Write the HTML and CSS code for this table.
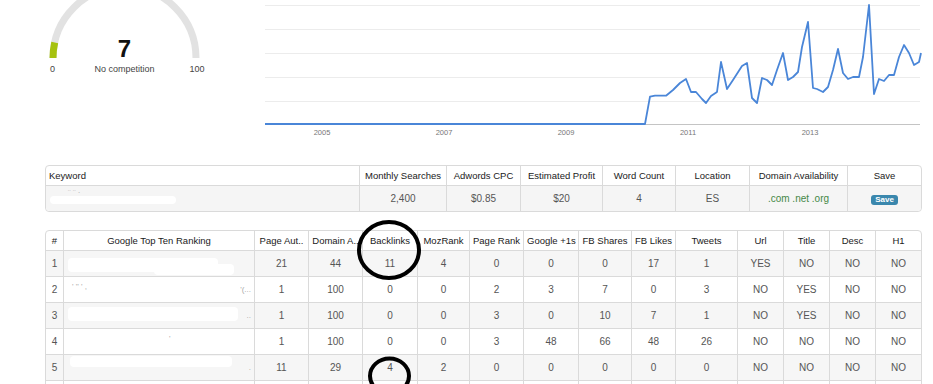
FILE: index.html
```html
<!DOCTYPE html>
<html lang="en">
<head>
<meta charset="utf-8">
<title>Keyword research</title>
<link rel="stylesheet" href="styles.css">
</head>
<body>
<div class="page">
  <section class="top">
    <svg class="gauge" width="265" height="165" viewBox="0 0 265 165">
      <path d="M 53 58 A 71.5 71.5 0 0 1 196 58" fill="none" stroke="#e2e2e2" stroke-width="7"/>
      <path d="M 53 58 A 71.5 71.5 0 0 1 54.72 42.4" fill="none" stroke="#a6c20f" stroke-width="7"/>
      <text class="g-value" x="124.5" y="57" text-anchor="middle">7</text>
      <text class="g-label" x="124.5" y="71.5" text-anchor="middle">No competition</text>
      <text class="g-label" x="52.5" y="71.5" text-anchor="middle">0</text>
      <text class="g-label" x="197" y="71.5" text-anchor="middle">100</text>
    </svg>
    <svg class="trend" width="668" height="165" viewBox="265 0 668 165">
      <g stroke="#ececec" stroke-width="1">
        <line x1="265" y1="5.5" x2="920" y2="5.5"/>
        <line x1="265" y1="29.5" x2="920" y2="29.5"/>
        <line x1="265" y1="53.5" x2="920" y2="53.5"/>
        <line x1="265" y1="77.5" x2="920" y2="77.5"/>
        <line x1="265" y1="101.5" x2="920" y2="101.5"/>
      </g>
      <line x1="265" y1="124.5" x2="920" y2="124.5" stroke="#c4c4c4" stroke-width="1"/>
      <polyline fill="none" stroke="#4a86d8" stroke-width="1.8" stroke-linejoin="round"
        points="265,124 645,124 650,96.7 655,95.7 666,95.7 673,90 680,83 686,79 691,92 696,92 702,99 706,103 711,96 717,92 721,62 727,89 733,80 742,66 747,63 752,98 757,103 762,78 767,80 772,85 777,70 783,53 788,80 793,77 798,72 802,47 808,22 813,88 817,89 823,92 828,87 833,70 838,49 843,73 848,79 853,77 859,77 863,57 869,5 874,94 879,79 884,81 889,75 894,75 899,57 904,45 909,53 914,65 919,62 921,53"/>
      <g class="year">
        <text x="322" y="135" text-anchor="middle">2005</text>
        <text x="444" y="135" text-anchor="middle">2007</text>
        <text x="566" y="135" text-anchor="middle">2009</text>
        <text x="688" y="135" text-anchor="middle">2011</text>
        <text x="810" y="135" text-anchor="middle">2013</text>
      </g>
    </svg>
  </section>

  <section class="tables">
    <table class="tbl kw">
      <colgroup>
        <col style="width:313px"><col style="width:87px"><col style="width:74px"><col style="width:82px">
        <col style="width:73px"><col style="width:74px"><col style="width:98px"><col style="width:74px">
      </colgroup>
      <thead>
        <tr>
          <th class="left">Keyword</th>
          <th>Monthly Searches</th>
          <th>Adwords CPC</th>
          <th>Estimated Profit</th>
          <th>Word Count</th>
          <th>Location</th>
          <th>Domain Availability</th>
          <th>Save</th>
        </tr>
      </thead>
      <tbody>
        <tr>
          <td class="left kwcell"><span class="specks kw-specks">¨ ¨ ·</span><span class="redact redact-kw"></span></td>
          <td>2,400</td>
          <td>$0.85</td>
          <td>$20</td>
          <td>4</td>
          <td>ES</td>
          <td><span class="avail">.com .net .org</span></td>
          <td><span class="label">Save</span></td>
        </tr>
      </tbody>
    </table>

    <table class="tbl rank">
      <colgroup>
        <col style="width:17px"><col style="width:191px"><col style="width:54px"><col style="width:54px">
        <col style="width:55px"><col style="width:52px"><col style="width:54px"><col style="width:55px">
        <col style="width:53px"><col style="width:44px"><col style="width:62px"><col style="width:46px">
        <col style="width:46px"><col style="width:46px"><col style="width:46px">
      </colgroup>
      <thead>
        <tr>
          <th>#</th><th>Google Top Ten Ranking</th><th>Page Aut..</th><th>Domain A..</th><th>Backlinks</th>
          <th>MozRank</th><th>Page Rank</th><th>Google +1s</th><th>FB Shares</th><th>FB Likes</th>
          <th>Tweets</th><th>Url</th><th>Title</th><th>Desc</th><th>H1</th>
        </tr>
      </thead>
      <tbody>
        <tr>
          <td>1</td>
          <td class="left site"><span class="redact redact-1a"></span><span class="redact redact-1b"></span></td>
          <td>21</td><td>44</td><td>11</td><td>4</td><td>0</td><td>0</td><td>0</td><td>17</td><td>1</td>
          <td>YES</td><td>NO</td><td>NO</td><td>NO</td>
        </tr>
        <tr>
          <td>2</td>
          <td class="left site"><span class="specks">' ''  '  ,</span><span class="specks tail">'(...</span></td>
          <td>1</td><td>100</td><td>0</td><td>0</td><td>2</td><td>3</td><td>7</td><td>0</td><td>3</td>
          <td>NO</td><td>YES</td><td>NO</td><td>NO</td>
        </tr>
        <tr>
          <td>3</td>
          <td class="left site"><span class="redact redact-3"></span><span class="specks tail">..</span></td>
          <td>1</td><td>100</td><td>0</td><td>0</td><td>3</td><td>0</td><td>10</td><td>7</td><td>1</td>
          <td>NO</td><td>YES</td><td>NO</td><td>NO</td>
        </tr>
        <tr>
          <td>4</td>
          <td class="left site"><span class="specks mid">'</span></td>
          <td>1</td><td>100</td><td>0</td><td>0</td><td>3</td><td>48</td><td>66</td><td>48</td><td>26</td>
          <td>NO</td><td>NO</td><td>NO</td><td>NO</td>
        </tr>
        <tr>
          <td>5</td>
          <td class="left site"><span class="redact redact-5"></span><span class="specks tail">.</span></td>
          <td>11</td><td>29</td><td>4</td><td>2</td><td>0</td><td>0</td><td>0</td><td>0</td><td>0</td>
          <td>NO</td><td>NO</td><td>NO</td><td>NO</td>
        </tr>
        <tr class="next">
          <td></td><td class="left site"></td><td></td><td></td><td></td><td></td><td></td><td></td>
          <td></td><td></td><td></td><td></td><td></td><td></td><td></td>
        </tr>
      </tbody>
    </table>
  </section>

  <svg class="marks" width="933" height="384" viewBox="0 0 933 384">
    <ellipse cx="389" cy="250" rx="30" ry="28" fill="none" stroke="#000" stroke-width="4"/>
    <ellipse cx="389.5" cy="376" rx="19.5" ry="17.5" fill="none" stroke="#000" stroke-width="4"/>
  </svg>
</div>
</body>
</html>
```

FILE: styles.css
```css
html, body {
  margin: 0;
  padding: 0;
  height: 384px;
  overflow: hidden;
  background: #fff;
}

body {
  font-family: "Liberation Sans", Arial, sans-serif;
  color: #555;
}

.page {
  position: relative;
  width: 933px;
  height: 384px;
  overflow: hidden;
}

.top {
  display: flex;
  height: 165px;
}

.gauge, .trend {
  display: block;
  flex: none;
}

.g-value {
  font-family: "Liberation Sans", Arial, sans-serif;
  font-weight: bold;
  font-size: 24px;
  fill: #111;
}

.g-label {
  font-family: "Liberation Sans", Arial, sans-serif;
  font-size: 9px;
  fill: #444;
}

.year text {
  font-family: "Liberation Sans", Arial, sans-serif;
  font-size: 7.5px;
  fill: #777;
}

.tables {
  padding-left: 45px;
  width: 875px;
}

.tbl {
  width: 875px;
  table-layout: fixed;
  border-collapse: separate;
  border-spacing: 0;
  border: 1px solid #dadada;
  border-radius: 4px;
  font-size: 10px;
  color: #555;
}

.tbl th,
.tbl td {
  border-left: 1px solid #dadada;
  border-top: 1px solid #dadada;
  padding: 0 3px;
  text-align: center;
  vertical-align: middle;
  white-space: nowrap;
  overflow: hidden;
}

.tbl tr > :first-child {
  border-left: 0;
}

.tbl thead th {
  border-top: 0;
  height: 19px;
  font-size: 9.5px;
  font-weight: normal;
  color: #1a1a1a;
}

.tbl td {
  height: 25px;
}

.tbl .left {
  text-align: left;
}

.kw {
  margin-bottom: 18px;
}

.kw tbody td {
  background: #f5f5f5;
}

.kw tbody td:first-child {
  border-bottom-left-radius: 4px;
}

.kw tbody td:last-child {
  border-bottom-right-radius: 4px;
}

.rank tbody tr:nth-child(odd) td {
  background: #f6f6f6;
}

.avail {
  color: #468847;
}

.label {
  display: inline-block;
  background: #3a87ad;
  color: #fff;
  font-weight: bold;
  font-size: 8px;
  line-height: 8px;
  padding: 1px 4px;
  border-radius: 3px;
}

.kwcell,
.site {
  position: relative;
}

.redact {
  position: absolute;
  background: #fff;
  border-radius: 4px;
}

.redact-kw {
  left: 4px;
  top: 10px;
  width: 126px;
  height: 8px;
}

.redact-1a {
  left: 4px;
  top: 7px;
  width: 150px;
  height: 14px;
}

.redact-1b {
  left: 90px;
  top: 13px;
  width: 80px;
  height: 11px;
}

.redact-3 {
  left: 4px;
  top: 4px;
  width: 170px;
  height: 14px;
}

.redact-5 {
  left: 6px;
  top: 1px;
  width: 162px;
  height: 11px;
}

.specks {
  position: absolute;
  color: #aaa;
  font-size: 8px;
  top: 5px;
  left: 8px;
}

.kw-specks {
  left: 22px;
  top: 2px;
}

.specks.tail {
  left: auto;
  right: 3px;
  top: 8px;
}

.specks.mid {
  left: 105px;
  top: 5px;
}

.marks {
  position: absolute;
  top: 0;
  left: 0;
  pointer-events: none;
}
```
